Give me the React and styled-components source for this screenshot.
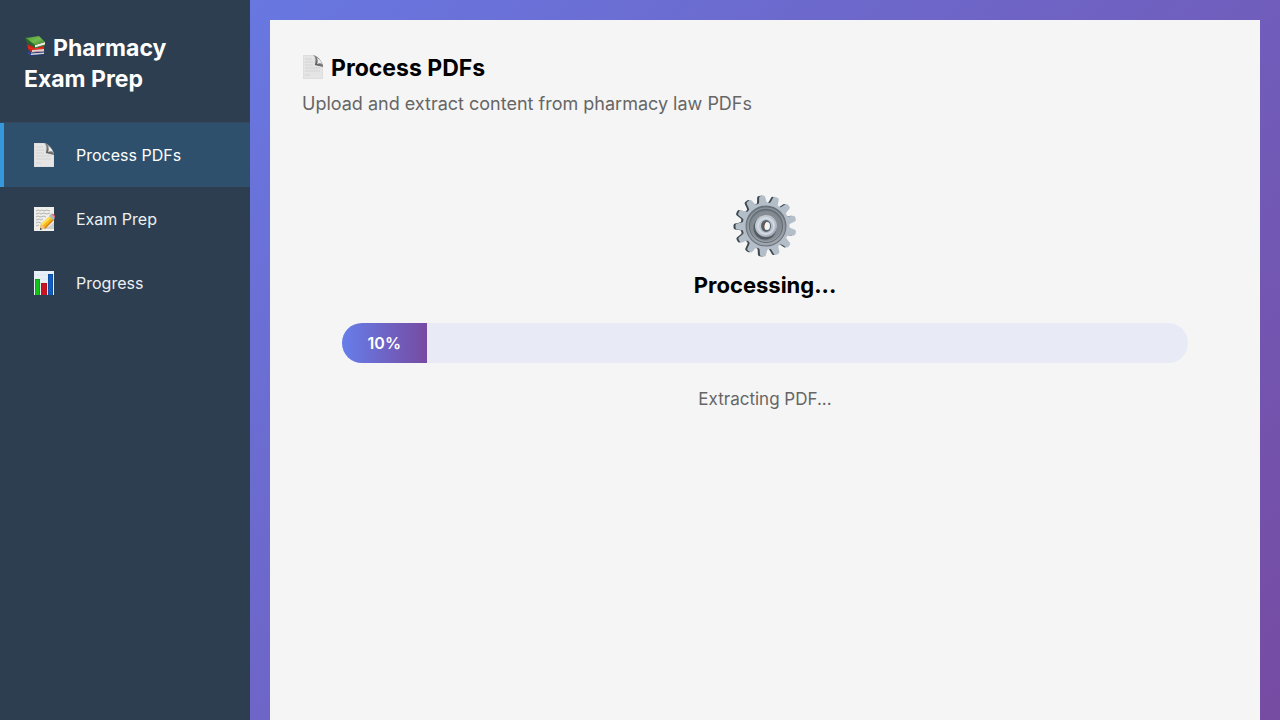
import React from "react";
import styled, { createGlobalStyle } from "styled-components";

const GlobalStyle = createGlobalStyle`
  *, *::before, *::after { box-sizing: border-box; }
  body {
    margin: 0;
    font-family: Inter, "Liberation Sans", sans-serif;
    font-size: 16px;
    color: #000;
    -webkit-font-smoothing: antialiased;
  }
  h1, h2, h3, p { margin: 0; }
`;

const Shell = styled.div`
  display: flex;
  min-height: 100vh;
  background: linear-gradient(135deg, #667eea 0%, #764ba2 100%);
`;

const Sidebar = styled.aside`
  flex: 0 0 250px;
  background: #2d3e50;
  color: #fff;
`;

const Brand = styled.h1`
  padding: 33px 24px 27px;
  border-bottom: 1px solid #34495e;
  font-size: 23px;
  line-height: 31px;
  font-weight: 700;
`;

const Nav = styled.nav`
  display: flex;
  flex-direction: column;
`;

const NavButton = styled.button`
  display: flex;
  align-items: center;
  gap: 16px;
  height: 64px;
  padding: 0 24px;
  border: 0;
  border-left: 4px solid ${(p) => (p.$active ? "#3498db" : "transparent")};
  background: ${(p) => (p.$active ? "#2e506c" : "transparent")};
  color: ${(p) => (p.$active ? "#fff" : "#ecf0f1")};
  font-family: inherit;
  font-size: 16px;
  text-align: left;
  cursor: pointer;
`;

const NavIcon = styled.span`
  display: flex;
  justify-content: center;
  width: 32px;
`;

const Main = styled.main`
  flex: 1;
  display: flex;
  min-width: 0;
  padding: 20px 20px 0;
`;

const Panel = styled.section`
  flex: 1;
  min-width: 0;
  padding: 33px 32px 32px;
  background: #f5f5f5;
`;

const Title = styled.h2`
  font-size: 23px;
  line-height: 31px;
  font-weight: 700;
`;

const Inline = styled.span`
  display: inline-block;
  width: 24px;
  height: 24px;
  margin-right: 5px;
  vertical-align: -3px;
  svg { display: block; }
`;

const Subtitle = styled.p`
  margin-top: 8px;
  font-size: 18px;
  line-height: 24px;
  color: #666;
`;

const Status = styled.div`
  display: flex;
  flex-direction: column;
  align-items: center;
  padding: 78px 40px 40px;
`;

const StatusTitle = styled.h3`
  margin-top: 12px;
  font-size: 22px;
  line-height: 30px;
  font-weight: 700;
`;

const Track = styled.div`
  width: 100%;
  height: 40px;
  margin-top: 23px;
  overflow: hidden;
  border-radius: 20px;
  background: #e8eaf6;
`;

const Fill = styled.div`
  display: flex;
  align-items: center;
  justify-content: center;
  height: 100%;
  background: linear-gradient(90deg, #667eea, #764ba2);
  color: #fff;
  font-size: 16px;
  font-weight: 600;
`;

const Message = styled.p`
  margin-top: 24px;
  font-size: 17px;
  line-height: 24px;
  color: #666;
`;

function Books() {
  return (
    <svg width="24" height="24" viewBox="0 0 24 24" aria-hidden="true">
      <defs>
        <linearGradient id="cover" x1="0" y1="0" x2="1" y2="1">
          <stop offset="0" stopColor="#4f9b35" />
          <stop offset=".5" stopColor="#73b950" />
          <stop offset="1" stopColor="#36852a" />
        </linearGradient>
      </defs>
      <path d="M4 16l14-1 3 3-14 3-3-2z" fill="#304b91" />
      <path d="M7 17l13-1v3L7 20z" fill="#d6d2da" />
      <path d="M4 16l3 2 13-1M6 21l14-1" stroke="#26356f" fill="none" />
      <path d="M3 9l5 2 12-1v6L7 17l-3-3z" fill="#cc2219" />
      <path d="M8 15l12-1v2L8 17z" fill="#ddcfcc" />
      <path d="M4 12l4 2 12-1" stroke="#ed3526" fill="none" />
      <path d="M1 3l2-1 8 8v3L3 8z" fill="#28662a" />
      <path d="M11 10l10-3v3l-10 3z" fill="#eee9dc" />
      <path d="M2 3L15 1l6 6-10 3z" fill="url(#cover)" />
      <path d="M11 13l10-3" stroke="#34782e" />
    </svg>
  );
}

function Page({ id }) {
  return (
    <svg width="22" height="24" viewBox="0 0 22 24" aria-hidden="true">
      <defs>
        <linearGradient id={id} x1="0" y1="1" x2="1" y2="0">
          <stop offset="0" stopColor="#444" />
          <stop offset=".5" stopColor="#777" />
          <stop offset="1" stopColor="#ddd" />
        </linearGradient>
      </defs>
      <path d="M1 0h11l3 2 6 8v14H1z" fill="#dedede" />
      <path d="M2 1h10v10h8v12H2z" fill="#e5e5e5" />
      <path d="M11 0c3 2 3 5 2 10l8 2v-2c-2-5-5-9-10-10z" fill={`url(#${id})`} />
      <path d="M15 3c1 2 1 4 0 6 2-1 4-1 5 0-1-3-3-5-5-6z" fill="#eee" />
      <path d="M3 4h7M3 7h8M3 10h8M3 13h15M3 16h15M3 20h5" stroke="#cbcbcb" strokeWidth=".7" />
    </svg>
  );
}

function Memo() {
  return (
    <svg width="22" height="24" viewBox="0 0 22 24" aria-hidden="true">
      <path d="M1 0h20v24H1z" fill="#eeeeeb" />
      <path d="M3 4l2-1 2 1 2-1 2 1 3-1 3 1M3 7l3-1 2 1 3-1 3 1 3-1M3 10l2-1 3 1 3-1 2 1M3 13l3-1 2 1 2-1M3 16l2-1 3 1M3 19l3-1" stroke="#999" strokeWidth=".7" fill="none" />
      <path d="M8 22l9-3 4-4v7z" fill="#cfcfcc" />
      <path d="M8 17L17 9l4 3-9 9-4 1-1-2z" fill="#f4b71b" />
      <path d="M8 17l9-8 1 2-9 8z" fill="#ffe052" />
      <path d="M11 21l9-9 1 1-9 9z" fill="#db7d0a" />
      <path d="M7 21l1-4 4 4-4 2z" fill="#edc18d" />
      <path d="M7 21v2l2-1z" fill="#31281f" />
      <path d="M16 9l2-2 4 4-2 2z" fill="#a9b9bd" />
      <path d="M18 7c2-1 5 1 4 4z" fill="#e56670" />
    </svg>
  );
}

function Chart() {
  return (
    <svg width="22" height="24" viewBox="0 0 22 24" aria-hidden="true">
      <path d="M1 0h20v24H1z" fill="#e9f0f7" />
      <path d="M1 4h20M1 8h20M1 12h20M1 16h20M1 20h20" stroke="#d2dce6" strokeWidth=".5" />
      <path d="M2 8h5v16H2z" fill="#0da514" />
      <path d="M3 9h3v15H3z" fill="#12c41a" />
      <path d="M8 12h6v12H8z" fill="#b5121d" />
      <path d="M9 13h4v11H9z" fill="#cc1420" />
      <path d="M15 3h5v21h-5z" fill="#0d4fa7" />
      <path d="M16 4h3v20h-3z" fill="#125dc0" />
    </svg>
  );
}

const toothAngles = Array.from({ length: 13 }, (_, i) => (i * 360) / 13 + 20);

function GearShape({ fill }) {
  return (
    <g fill={fill}>
      <circle r="23.5" />
      {toothAngles.map((angle) => (
        <path key={angle} transform={`rotate(${angle})`} d="M-5.5-21Q-3.8-23-3.6-25L-3-29Q-2.7-30.5-1-30.5H1Q2.7-30.5 3-29L3.6-25Q3.8-23 5.5-21z" />
      ))}
    </g>
  );
}

function Gear() {
  return (
    <svg width="64" height="64" viewBox="0 0 64 64" role="img" aria-label="Processing">
      <defs>
        <linearGradient id="metal" gradientUnits="userSpaceOnUse" x1="-20" y1="-28" x2="20" y2="28">
          <stop offset="0" stopColor="#b3c0ca" />
          <stop offset=".5" stopColor="#b3bbc7" />
          <stop offset="1" stopColor="#bdb9c7" />
        </linearGradient>
        <linearGradient id="side" gradientUnits="userSpaceOnUse" x1="-20" y1="-28" x2="20" y2="28">
          <stop offset="0" stopColor="#304451" />
          <stop offset=".6" stopColor="#59504d" />
          <stop offset="1" stopColor="#546075" />
        </linearGradient>
        <linearGradient id="dish" x1="0" y1="0" x2="0" y2="1">
          <stop offset="0" stopColor="#68727a" />
          <stop offset=".5" stopColor="#858c94" />
          <stop offset="1" stopColor="#a0a6ad" />
        </linearGradient>
        <linearGradient id="hub" x1="0" y1="0" x2="1" y2="1">
          <stop offset="0" stopColor="#c6ced5" />
          <stop offset=".55" stopColor="#b9c1cc" />
          <stop offset="1" stopColor="#9ca5b5" />
        </linearGradient>
      </defs>
      <g transform="translate(31 32)"><GearShape fill="url(#side)" /></g>
      <g transform="translate(33 32)">
        <GearShape fill="url(#metal)" />
        <circle r="20.5" fill="#68727b" />
        <circle r="19.5" fill="url(#dish)" />
        <circle r="18" fill="none" stroke="#a1a8af" strokeWidth=".8" />
        <circle r="16.5" fill="none" stroke="#626c75" strokeWidth="1" />
        <circle r="15" fill="#848b92" />
        <circle cx="-1" cy="2" r="11.5" fill="#525a62" />
        <circle r="11" fill="url(#hub)" />
        <circle r="8" fill="none" stroke="#d3dae2" strokeWidth="2" />
        <ellipse rx="5" ry="6" fill="#536474" />
        <ellipse cx="1" rx="3" ry="4" fill="#f5f5f5" />
        <path d="M-2-4c-2 3-2 6 1 9-1-3-1-6 1-9z" fill="#78533e" />
      </g>
    </svg>
  );
}

const navItems = [
  { label: "Process PDFs", icon: <Page id="nav-fold" />, active: true },
  { label: "Exam Prep", icon: <Memo /> },
  { label: "Progress", icon: <Chart /> },
];

export default function App() {
  const progress = 10;
  return (
    <Shell>
      <GlobalStyle />
      <Sidebar>
        <Brand><Inline><Books /></Inline>Pharmacy Exam Prep</Brand>
        <Nav>
          {navItems.map(({ label, icon, active }) => (
            <NavButton key={label} type="button" $active={active} aria-current={active ? "page" : undefined}>
              <NavIcon>{icon}</NavIcon>
              {label}
            </NavButton>
          ))}
        </Nav>
      </Sidebar>
      <Main>
        <Panel>
          <Title><Inline><Page id="title-fold" /></Inline>Process PDFs</Title>
          <Subtitle>Upload and extract content from pharmacy law PDFs</Subtitle>
          <Status>
            <Gear />
            <StatusTitle>Processing...</StatusTitle>
            <Track role="progressbar" aria-label="PDF extraction" aria-valuemin={0} aria-valuemax={100} aria-valuenow={progress}>
              <Fill style={{ width: `${progress}%` }}>{progress}%</Fill>
            </Track>
            <Message>Extracting PDF...</Message>
          </Status>
        </Panel>
      </Main>
    </Shell>
  );
}
